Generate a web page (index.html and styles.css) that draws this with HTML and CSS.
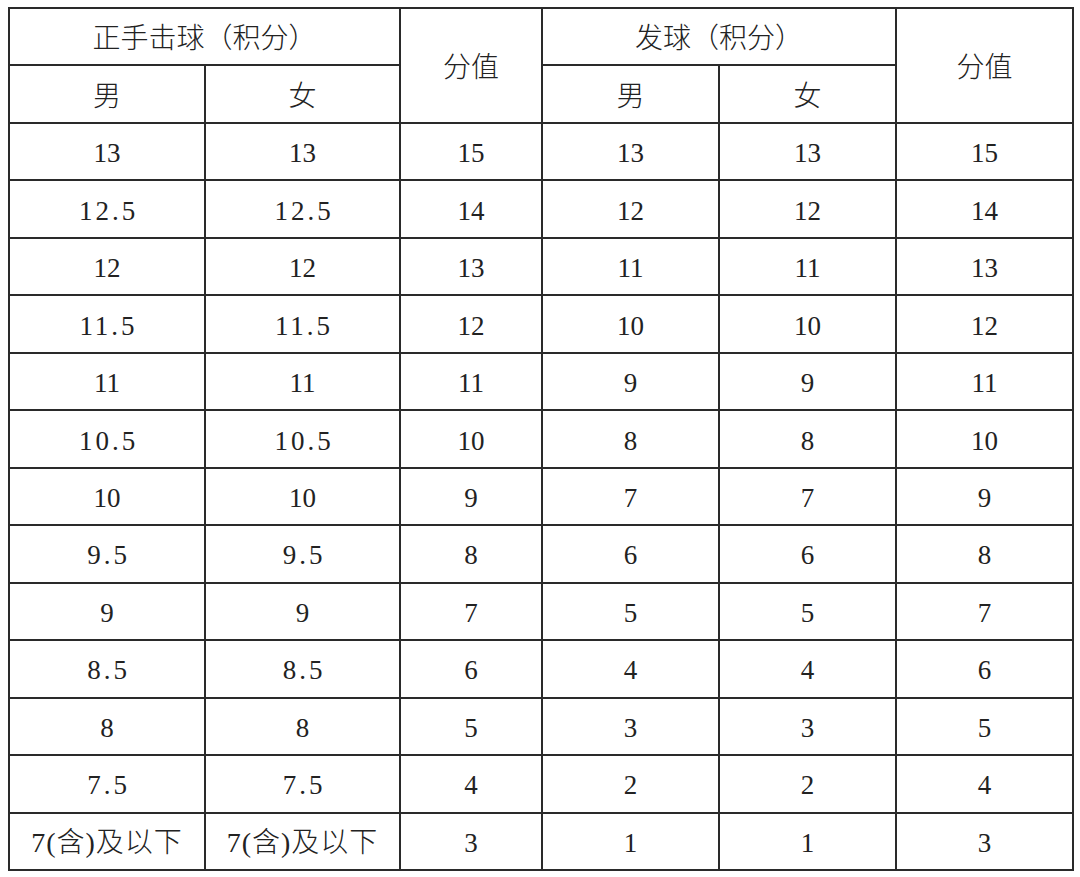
FILE: index.html
```html
<!DOCTYPE html>
<html lang="zh-CN">
<head>
<meta charset="utf-8">
<title>评分表</title>
<link rel="stylesheet" href="styles.css">
</head>
<body>
<div class="page">
<table class="score">
  <colgroup>
    <col class="c1"><col class="c2"><col class="c3"><col class="c4"><col class="c5"><col class="c6">
  </colgroup>
  <thead>
    <tr>
      <th colspan="2" class="zh">正手击球（积分）</th>
      <th rowspan="2" class="zh">分值</th>
      <th colspan="2" class="zh">发球（积分）</th>
      <th rowspan="2" class="zh">分值</th>
    </tr>
    <tr>
      <th class="zh">男</th>
      <th class="zh">女</th>
      <th class="zh">男</th>
      <th class="zh">女</th>
    </tr>
  </thead>
  <tbody>
    <tr><td>13</td><td>13</td><td>15</td><td>13</td><td>13</td><td>15</td></tr>
    <tr><td class="dec">12.5</td><td class="dec">12.5</td><td>14</td><td>12</td><td>12</td><td>14</td></tr>
    <tr><td>12</td><td>12</td><td>13</td><td>11</td><td>11</td><td>13</td></tr>
    <tr><td class="dec">11.5</td><td class="dec">11.5</td><td>12</td><td>10</td><td>10</td><td>12</td></tr>
    <tr><td>11</td><td>11</td><td>11</td><td>9</td><td>9</td><td>11</td></tr>
    <tr><td class="dec">10.5</td><td class="dec">10.5</td><td>10</td><td>8</td><td>8</td><td>10</td></tr>
    <tr><td>10</td><td>10</td><td>9</td><td>7</td><td>7</td><td>9</td></tr>
    <tr><td class="dec">9.5</td><td class="dec">9.5</td><td>8</td><td>6</td><td>6</td><td>8</td></tr>
    <tr><td>9</td><td>9</td><td>7</td><td>5</td><td>5</td><td>7</td></tr>
    <tr><td class="dec">8.5</td><td class="dec">8.5</td><td>6</td><td>4</td><td>4</td><td>6</td></tr>
    <tr><td>8</td><td>8</td><td>5</td><td>3</td><td>3</td><td>5</td></tr>
    <tr><td class="dec">7.5</td><td class="dec">7.5</td><td>4</td><td>2</td><td>2</td><td>4</td></tr>
    <tr><td class="mix">7(含)及以下</td><td class="mix">7(含)及以下</td><td>3</td><td>1</td><td>1</td><td>3</td></tr>
  </tbody>
</table>
</div>
</body>
</html>
```
FILE: styles.css
```css
html, body {
  margin: 0;
  padding: 0;
  background: #ffffff;
}

.page {
  padding: 7px 0 0 8px;
}

.score {
  border-collapse: collapse;
  table-layout: fixed;
  width: 1064px;
  font-family: "Liberation Serif", "Noto Sans CJK SC", serif;
  font-size: 27px;
  color: #222222;
}

.c1 { width: 196px; }
.c2 { width: 195px; }
.c3 { width: 142px; }
.c4 { width: 177px; }
.c5 { width: 177px; }
.c6 { width: 177px; }

.score tr {
  height: 57.47px;
}

.score th,
.score td {
  border: 2px solid #2a2a2a;
  padding: 4px 0 0 0;
  text-align: center;
  vertical-align: middle;
  font-weight: normal;
  line-height: 1;
}

.score th.zh {
  font-size: 28px;
  font-weight: 300;
  padding-top: 5px;
}

.score td.mix {
  font-size: 28px;
  font-weight: 300;
  letter-spacing: 1px;
}

.dec {
  letter-spacing: 3px;
  text-indent: 3px;
}
```
